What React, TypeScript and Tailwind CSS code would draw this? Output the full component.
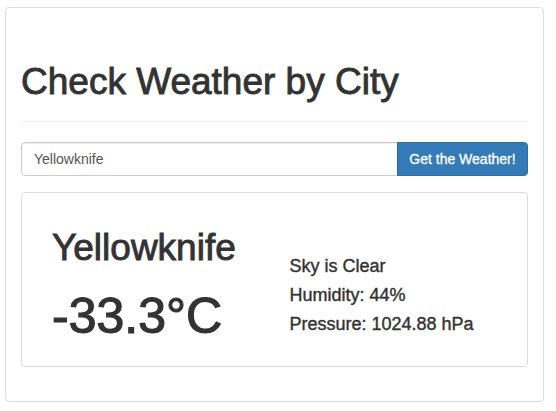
import { useState } from "react"

interface IWeather {
    city: string
    temp: string
    sky: string
    humidity: string
    pressure: string
}

const DUMMY_WEATHER: IWeather = {
    city: "Yellowknife",
    temp: "-33.3°C",
    sky: "Sky is Clear",
    humidity: "Humidity: 44%",
    pressure: "Pressure: 1024.88 hPa"
}

function WeatherCard({ data }: { data: IWeather }) {
    return (
        <div className="mt-4 border border-[#ddd] rounded-[4px] px-[30px] pt-[35px] pb-[22px] grid grid-cols-2 gap-x-[30px]">
            <div>
                <h2 className="text-[37px] leading-[40px] font-normal [-webkit-text-stroke:0.9px_#333]">{data.city}</h2>
                <div className="mt-5 text-[50px] leading-[56px] [-webkit-text-stroke:1.2px_#333]">{data.temp}</div>
            </div>
            <div className="mt-[24px] text-[18px] leading-[29px] [-webkit-text-stroke:0.4px_#333]">
                <div>{data.sky}</div>
                <div>{data.humidity}</div>
                <div>{data.pressure}</div>
            </div>
        </div>
    )
}

function App() {
    const [city, setCity] = useState("Yellowknife")

    return (
        <div className="min-h-screen bg-white text-[#333]" style={{ fontFamily: '"Liberation Sans", Arial, sans-serif' }}>
            <div className="ml-[5px] pt-[7px]">
                <div className="w-[539px] border border-[#ddd] rounded-[4px] px-[15px] pt-[54px] pb-[34px]">
                    <div className="pb-[19px] border-b border-[#eee]">
                        <h1 className="text-[37px] leading-[40px] font-normal [-webkit-text-stroke:0.9px_#333]">Check Weather by City</h1>
                    </div>
                    <div className="mt-5 flex h-[34px]">
                        <input
                            className="flex-1 min-w-0 border border-[#ccc] rounded-l-[4px] px-3 text-[14px] text-[#555] shadow-[inset_0_1px_1px_rgba(0,0,0,0.075)] outline-none"
                            value={city}
                            onChange={(e) => setCity(e.target.value)}
                        />
                        <button className="w-[131px] bg-[#337ab7] border border-[#2e6da4] -ml-px rounded-r-[4px] text-white text-[14px] cursor-pointer [-webkit-text-stroke:0.3px_#fff]">
                            Get the Weather!
                        </button>
                    </div>
                    <WeatherCard data={DUMMY_WEATHER} />
                </div>
            </div>
        </div>
    )
}

export default App
